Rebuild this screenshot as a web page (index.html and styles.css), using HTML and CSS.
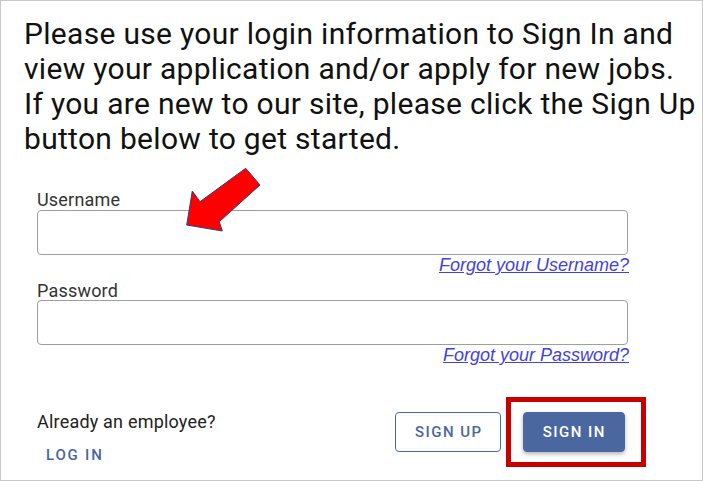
FILE: index.html
```html
<!DOCTYPE html>
<html lang="en">
<head>
<meta charset="utf-8">
<title>Sign In</title>
<link rel="stylesheet" href="styles.css">
</head>
<body>
<div class="frame">
  <p class="intro">Please use your login information to Sign In and view your application and/or apply for new jobs.<br>If you are new to our site, please click the Sign Up button below to get started.</p>
  <form class="login">
    <label class="field-label" for="username">Username</label>
    <input class="field" id="username" type="text">
    <div class="forgot-row"><a class="forgot" href="#">Forgot your Username?</a></div>
    <label class="field-label second" for="password">Password</label>
    <input class="field" id="password" type="password">
    <div class="forgot-row"><a class="forgot" href="#">Forgot your Password?</a></div>
  </form>
  <div class="actions">
    <div class="employee">
      <span class="employee-text">Already an employee?</span>
      <a class="login-link" href="#">LOG IN</a>
    </div>
    <div class="buttons">
      <button class="btn outline" type="button">SIGN UP</button>
      <div class="highlight">
        <button class="btn filled" type="button">SIGN IN</button>
      </div>
    </div>
  </div>
  <svg class="arrow" viewBox="180 160 90 75" width="90" height="75" aria-hidden="true">
    <polygon points="245.7,168.3 260,185 219.3,221.7 222.3,231 186.7,225 192.3,191 200,201.7" fill="#ff0000" stroke="#2e3f80" stroke-width="1" stroke-linejoin="miter"/>
  </svg>
</div>
</body>
</html>
```

FILE: styles.css
```css
html, body {
  margin: 0;
  padding: 0;
  background: #ffffff;
}

.frame {
  position: relative;
  box-sizing: border-box;
  width: 703px;
  height: 481px;
  border: 1px solid #c8c8c8;
  padding-left: 23px;
  background: #ffffff;
  font-family: Roboto, "Liberation Sans", Arial, sans-serif;
  overflow: hidden;
}

.intro {
  margin: 15px 0 0;
  font-size: 30px;
  line-height: 35px;
  letter-spacing: 0.3px;
  color: #111111;
}

.login {
  margin: 34px 0 0 13px;
  width: 591px;
  display: flex;
  flex-direction: column;
}

.field-label {
  display: block;
  font-size: 18px;
  line-height: 20px;
  letter-spacing: 0.2px;
  color: #333333;
}

.field-label.second {
  margin-top: 5px;
  line-height: 19px;
}

.field {
  display: block;
  box-sizing: border-box;
  width: 591px;
  height: 45px;
  margin: 0;
  border: 1px solid #9e9e9e;
  border-radius: 4px;
  background: #ffffff;
  font: inherit;
}

.forgot-row {
  display: flex;
  justify-content: flex-end;
  margin-right: -1px;
}

.forgot {
  font-family: "Liberation Sans", Arial, sans-serif;
  font-style: italic;
  font-size: 18px;
  line-height: 21px;
  color: #4141e6;
  text-decoration: underline;
}

.actions {
  margin: 31px 0 0 13px;
  width: 609px;
  display: flex;
  justify-content: space-between;
  align-items: flex-start;
}

.employee {
  margin-top: 15px;
  display: flex;
  flex-direction: column;
  align-items: flex-start;
}

.employee-text {
  font-size: 18px;
  line-height: 20px;
  letter-spacing: 0.2px;
  color: #222222;
}

.login-link {
  margin: 14px 0 0 9px;
  font-size: 15px;
  line-height: 18px;
  font-weight: 500;
  letter-spacing: 1.8px;
  color: #4b65a0;
  text-decoration: none;
}

.buttons {
  display: flex;
  align-items: center;
  gap: 5px;
}

.btn {
  box-sizing: border-box;
  height: 40px;
  margin: 0;
  padding: 0 17px 0 19px;
  border: 1px solid #4b67a0;
  border-radius: 4px;
  font-family: Roboto, "Liberation Sans", Arial, sans-serif;
  font-size: 15px;
  font-weight: 500;
  letter-spacing: 1.5px;
  cursor: pointer;
}

.btn.outline {
  background: #ffffff;
  color: #4b67a0;
}

.btn.filled {
  padding: 0 18px 0 19px;
  background: #4b67a0;
  color: #ffffff;
  box-shadow: 0 2px 4px rgba(0, 0, 0, 0.3);
}

.highlight {
  border: 5px solid #c80000;
  padding: 10px 16px 10px 12px;
  display: flex;
}

.arrow {
  position: absolute;
  left: 179px;
  top: 159px;
  pointer-events: none;
}
```
